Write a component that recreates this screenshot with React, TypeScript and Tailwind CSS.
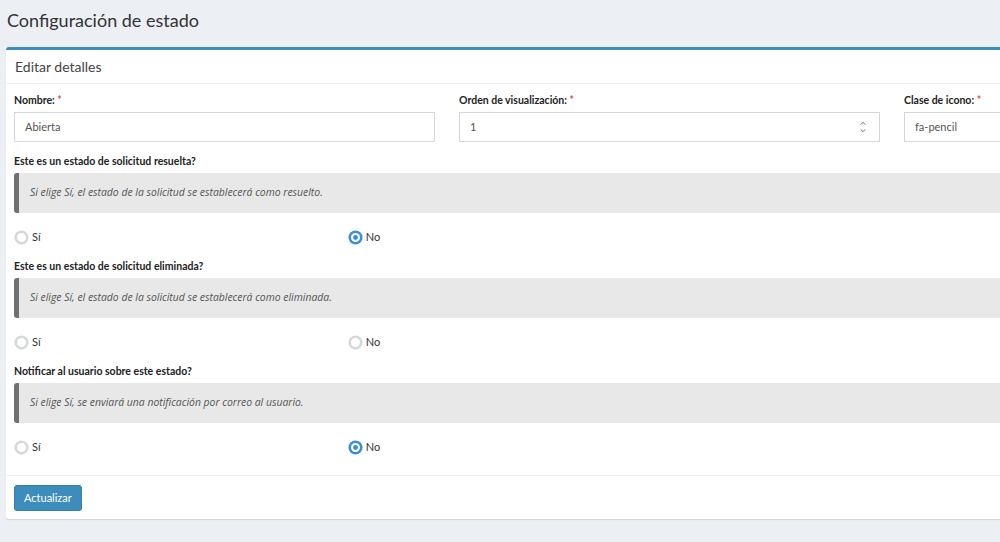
import React from "react";

const font = { fontFamily: "Lato, 'Open Sans', sans-serif" };

function Radio({ checked, label }: { checked: boolean; label: string }) {
  return (
    <div className="flex items-center gap-[3px] h-[16px]">
      {checked ? (
        <svg width="15" height="15" viewBox="0 0 16 16">
          <circle cx="8" cy="8" r="7.5" fill="#3a8fd6" />
          <circle cx="8" cy="8" r="4.8" fill="#ffffff" />
          <circle cx="8" cy="8" r="2.6" fill="#3a8fd6" />
        </svg>
      ) : (
        <svg width="15" height="15" viewBox="0 0 16 16">
          <circle cx="8" cy="8" r="6.2" fill="#ffffff" stroke="#d6d9dc" strokeWidth="2.8" />
        </svg>
      )}
      <span className="text-[11px] text-[#333]">{label}</span>
    </div>
  );
}

function Question({ q, note, yes }: { q: string; note: string; yes: boolean }) {
  return (
    <div className="flex flex-col">
      <div className="text-[10.5px] font-bold text-[#222] leading-[16px] mb-[4px]">{q}</div>
      <div className="h-[40px] bg-[#e8e8e8] border-l-[5px] border-[#707070] rounded-[3px] flex items-center pl-[11px]">
        <span className="italic text-[10.4px] text-[#555]" style={{ fontFamily: "'Open Sans', sans-serif" }}>{note}</span>
      </div>
      <div className="grid grid-cols-4 gap-[24px] mt-[16px]">
        <Radio checked={false} label="Sí" />
        <Radio checked={!yes} label="No" />
      </div>
    </div>
  );
}

function Label({ text }: { text: string }) {
  return (
    <div className="text-[10.5px] font-bold text-[#222] leading-[16px] mb-[4px]">
      {text} <span className="text-[#dd4b39]">*</span>
    </div>
  );
}

export default function App() {
  return (
    <div className="w-full min-h-[542px] bg-[#ecf0f5] overflow-hidden" style={font}>
      <div className="w-[1340px] px-[6px]">
        <div className="h-[47px] flex items-center pl-[1px] pb-[6px]">
          <h1 className="text-[18px] text-[#333]">Configuración de estado</h1>
        </div>
        <div className="w-[1327px] bg-white border-t-[3px] border-[#3c8dbc] rounded-[3px] shadow-[0_1px_1px_rgba(0,0,0,0.12)]">
          <div className="h-[34px] flex items-center px-[9px] border-b border-[#f0f0f0]">
            <span className="text-[14px] text-[#444]">Editar detalles</span>
          </div>
          <div className="px-[8px] pt-[8px] pb-[20px]">
            <div className="grid grid-cols-3 gap-[24px]">
              <div>
                <Label text="Nombre:" />
                <div className="h-[30px] border border-[#d2d6de] flex items-center px-[10px] text-[11px] text-[#555]">Abierta</div>
              </div>
              <div>
                <Label text="Orden de visualización:" />
                <div className="h-[30px] border border-[#d2d6de] flex items-center justify-between pl-[10px] pr-[12px] text-[11px] text-[#555]">
                  <span>1</span>
                  <svg width="8" height="14" viewBox="0 0 8 14">
                    <path d="M1.8 4.5 L4 2.3 L6.2 4.5" fill="none" stroke="#666" strokeWidth="1" />
                    <path d="M1.8 9.5 L4 11.7 L6.2 9.5" fill="none" stroke="#666" strokeWidth="1" />
                  </svg>
                </div>
              </div>
              <div>
                <Label text="Clase de icono:" />
                <div className="h-[30px] border border-[#d2d6de] flex items-center px-[10px] text-[11px] text-[#555]">fa-pencil</div>
              </div>
            </div>
            <div className="mt-[11px] flex flex-col gap-[13px]">
              <Question q="Este es un estado de solicitud resuelta?" note="Si elige Sí, el estado de la solicitud se establecerá como resuelto." yes={false} />
              <Question q="Este es un estado de solicitud eliminada?" note="Si elige Sí, el estado de la solicitud se establecerá como eliminada." yes={true} />
              <Question q="Notificar al usuario sobre este estado?" note="Si elige Sí, se enviará una notificación por correo al usuario." yes={false} />
            </div>
          </div>
          <div className="border-t border-[#f0f0f0] px-[8px] pt-[8px] pb-[8px]">
            <button className="h-[26px] px-[9px] bg-[#3c8dbc] border border-[#367fa9] rounded-[3px] text-white text-[11px]">Actualizar</button>
          </div>
        </div>
      </div>
    </div>
  );
}
